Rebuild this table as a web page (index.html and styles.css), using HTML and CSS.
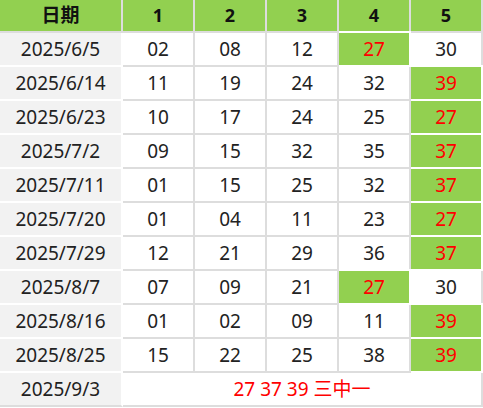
FILE: index.html
```html
<!DOCTYPE html>
<html lang="zh">
<head>
<meta charset="utf-8">
<link rel="stylesheet" href="styles.css">
</head>
<body>
<table class="draw">
  <colgroup>
    <col class="c-date"><col class="c-num"><col class="c-num"><col class="c-num"><col class="c-num"><col class="c-num">
  </colgroup>
  <thead>
    <tr><th class="h-date">日期</th><th>1</th><th>2</th><th>3</th><th>4</th><th>5</th></tr>
  </thead>
  <tbody>
    <tr><td class="date">2025/6/5</td><td>02</td><td>08</td><td>12</td><td class="hit">27</td><td>30</td></tr>
    <tr><td class="date">2025/6/14</td><td>11</td><td>19</td><td>24</td><td>32</td><td class="hit">39</td></tr>
    <tr><td class="date">2025/6/23</td><td>10</td><td>17</td><td>24</td><td>25</td><td class="hit">27</td></tr>
    <tr><td class="date">2025/7/2</td><td>09</td><td>15</td><td>32</td><td>35</td><td class="hit">37</td></tr>
    <tr><td class="date">2025/7/11</td><td>01</td><td>15</td><td>25</td><td>32</td><td class="hit">37</td></tr>
    <tr><td class="date">2025/7/20</td><td>01</td><td>04</td><td>11</td><td>23</td><td class="hit">27</td></tr>
    <tr><td class="date">2025/7/29</td><td>12</td><td>21</td><td>29</td><td>36</td><td class="hit">37</td></tr>
    <tr><td class="date">2025/8/7</td><td>07</td><td>09</td><td>21</td><td class="hit">27</td><td>30</td></tr>
    <tr><td class="date">2025/8/16</td><td>01</td><td>02</td><td>09</td><td>11</td><td class="hit">39</td></tr>
    <tr><td class="date">2025/8/25</td><td>15</td><td>22</td><td>25</td><td>38</td><td class="hit">39</td></tr>
    <tr class="last"><td class="date">2025/9/3</td><td class="pred" colspan="5">27 37 39 三中一</td></tr>
  </tbody>
</table>
</body>
</html>
```
FILE: styles.css
```css
html, body {
  margin: 0;
  padding: 0;
  background: #ffffff;
}

.draw {
  width: 483px;
  table-layout: fixed;
  border-collapse: separate;
  border-spacing: 0;
  font-family: "Noto Sans", "Noto Sans CJK SC", sans-serif;
  color: #222222;
}

.c-date { width: 123px; }
.c-num { width: 72px; }

.draw th,
.draw td {
  padding: 0;
  text-align: center;
  vertical-align: middle;
  border-right: 2px solid #dddddd;
  border-bottom: 2px solid #dddddd;
}

.draw th {
  height: 31px;
  background: #92d050;
  color: #111111;
  font-weight: 700;
  font-size: 18px;
  line-height: 31px;
}

.draw th.h-date {
  font-size: 19px;
}

.draw td {
  height: 32px;
  font-size: 19px;
  line-height: 32px;
}

.draw td.date {
  background: #f2f2f2;
  border-right-color: #ffffff;
  border-bottom-color: #ffffff;
}

.draw tr.last td.date {
  border-bottom-color: #dddddd;
}

.draw td.hit {
  background: #92d050;
  color: #ff0000;
  border-color: #ffffff;
  box-shadow: 0 -2px 0 #ffffff;
}

.draw td.pred {
  color: #ff0000;
}
```
